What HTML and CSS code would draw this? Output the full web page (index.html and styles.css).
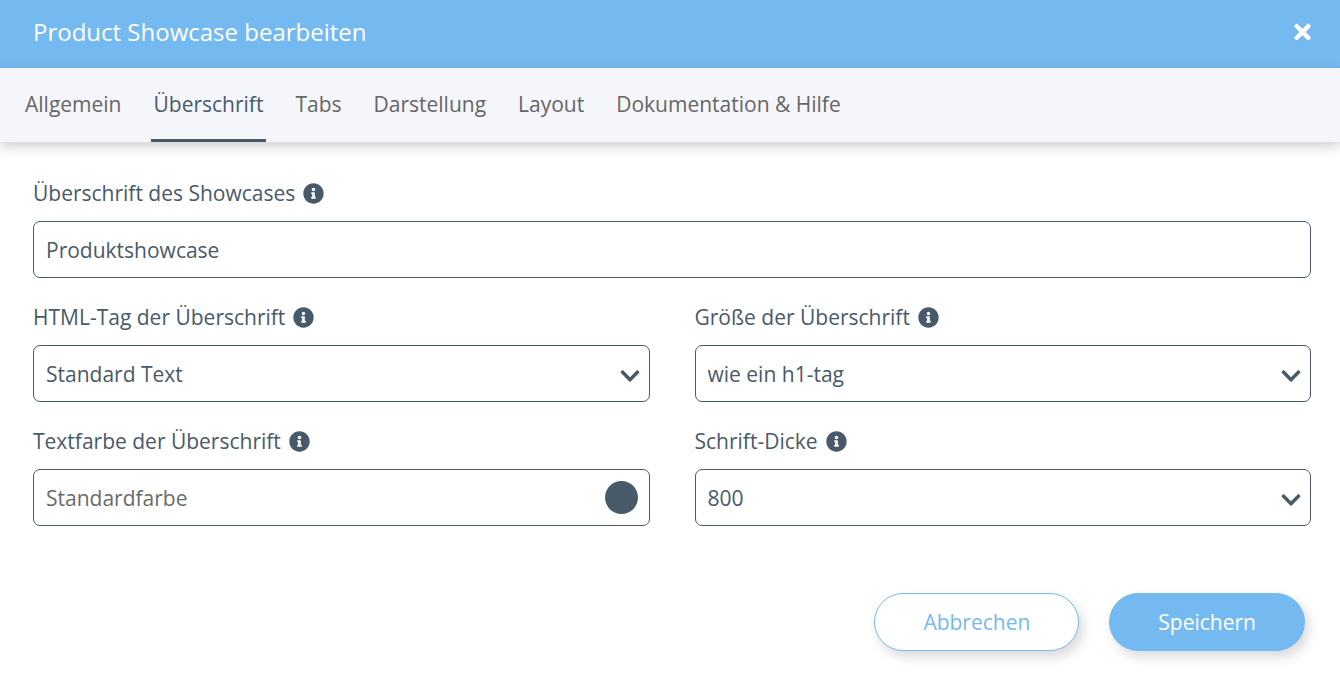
FILE: index.html
```html
<!DOCTYPE html>
<html lang="de">
<head>
  <meta charset="UTF-8">
  <meta name="viewport" content="width=device-width, initial-scale=1.0">
  <title>Product Showcase bearbeiten</title>
  <link rel="stylesheet" href="styles.css">
</head>
<body>

<!-- Icons -->
<svg class="sprite" aria-hidden="true">
  <symbol id="icon-info" viewBox="0 0 512 512">
    <path d="M256 8C119.043 8 8 119.083 8 256c0 136.997 111.043 248 248 248s248-111.003 248-248C504 119.083 392.957 8 256 8zm0 110c23.196 0 42 18.804 42 42s-18.804 42-42 42-42-18.804-42-42 18.804-42 42-42zm56 254c0 6.627-5.373 12-12 12h-88c-6.627 0-12-5.373-12-12v-24c0-6.627 5.373-12 12-12h12v-64h-12c-6.627 0-12-5.373-12-12v-24c0-6.627 5.373-12 12-12h64c6.627 0 12 5.373 12 12v100h12c6.627 0 12 5.373 12 12v24z"/>
  </symbol>
  <symbol id="icon-chevron" viewBox="0 0 448 512">
    <path d="M207.029 381.476L12.686 187.132c-9.373-9.373-9.373-24.569 0-33.941l22.667-22.667c9.357-9.357 24.522-9.375 33.901-.04L224 284.505l154.745-154.021c9.379-9.335 24.544-9.317 33.901.04l22.667 22.667c9.373 9.373 9.373 24.569 0 33.941L240.971 381.476c-9.373 9.372-24.569 9.372-33.942 0z"/>
  </symbol>
  <symbol id="icon-close" viewBox="0 0 352 512">
    <path d="M242.72 256l100.07-100.07c12.28-12.28 12.28-32.19 0-44.48l-22.24-22.24c-12.28-12.28-32.19-12.28-44.48 0L176 189.28 75.93 89.21c-12.28-12.28-32.19-12.28-44.48 0L9.21 111.45c-12.28 12.28-12.28 32.19 0 44.48L109.28 256 9.21 356.07c-12.28 12.28-12.28 32.19 0 44.48l22.24 22.24c12.28 12.28 32.2 12.28 44.48 0L176 322.72l100.07 100.07c12.28 12.28 32.2 12.28 44.48 0l22.24-22.24c12.28-12.28 12.28-32.19 0-44.48L242.72 256z"/>
  </symbol>
</svg>

<header class="modal-header">
  <h1>Product Showcase bearbeiten</h1>
  <button type="button" class="close" aria-label="Schließen">
    <svg><use href="#icon-close"/></svg>
  </button>
</header>

<nav class="tabs">
  <a href="#allgemein">Allgemein</a>
  <a href="#ueberschrift" class="active">Überschrift</a>
  <a href="#tabs">Tabs</a>
  <a href="#darstellung">Darstellung</a>
  <a href="#layout">Layout</a>
  <a href="#hilfe">Dokumentation &amp; Hilfe</a>
</nav>

<form class="settings">
  <div class="fields">
    <div class="field wide">
      <div class="field-label">
        <label for="title">Überschrift des Showcases</label>
        <svg class="info"><use href="#icon-info"/></svg>
      </div>
      <div class="control">
        <input type="text" id="title" value="Produktshowcase">
      </div>
    </div>

    <div class="field">
      <div class="field-label">
        <label for="tag">HTML-Tag der Überschrift</label>
        <svg class="info"><use href="#icon-info"/></svg>
      </div>
      <div class="control">
        <select id="tag">
          <option>Standard Text</option>
        </select>
        <svg class="chevron"><use href="#icon-chevron"/></svg>
      </div>
    </div>

    <div class="field">
      <div class="field-label">
        <label for="size">Größe der Überschrift</label>
        <svg class="info"><use href="#icon-info"/></svg>
      </div>
      <div class="control">
        <select id="size">
          <option>wie ein h1-tag</option>
        </select>
        <svg class="chevron"><use href="#icon-chevron"/></svg>
      </div>
    </div>

    <div class="field">
      <div class="field-label">
        <label for="color">Textfarbe der Überschrift</label>
        <svg class="info"><use href="#icon-info"/></svg>
      </div>
      <div class="control">
        <input type="text" id="color" placeholder="Standardfarbe">
        <button type="button" class="swatch" aria-label="Farbe wählen"></button>
      </div>
    </div>

    <div class="field">
      <div class="field-label">
        <label for="weight">Schrift-Dicke</label>
        <svg class="info"><use href="#icon-info"/></svg>
      </div>
      <div class="control">
        <select id="weight">
          <option>800</option>
        </select>
        <svg class="chevron"><use href="#icon-chevron"/></svg>
      </div>
    </div>
  </div>

  <div class="actions">
    <button type="button" class="btn">Abbrechen</button>
    <button type="submit" class="btn btn-primary">Speichern</button>
  </div>
</form>

</body>
</html>
```
FILE: styles.css
```css
* { margin: 0; padding: 0; box-sizing: border-box; }

body {
  font-family: "Open Sans", sans-serif;
  font-size: 21px;
  line-height: 30px;
  color: #485a6a;
  background: #fff;
}

button, input, select {
  font: inherit;
  color: inherit;
}
button { cursor: pointer; }
svg { fill: currentColor; }

.sprite { display: none; }

/* Kopfzeile */
.modal-header {
  display: flex;
  justify-content: space-between;
  align-items: center;
  height: 68px;
  padding: 0 29px 4px 33px;
  background: #75b9f1;
  color: #fff;
}
.modal-header h1 {
  font-size: 24px;
  font-weight: 400;
}
.close {
  display: flex;
  border: 0;
  background: none;
  color: inherit;
}
.close svg {
  width: 17px;
  height: 24px;
}

/* Reiter */
.tabs {
  display: flex;
  gap: 26px;
  height: 74px;
  padding: 0 22px;
  background: #f5f6fb;
  box-shadow: 0 4px 12px rgba(0, 0, 0, 0.2);
}
.tabs a {
  padding: 21px 3px 0;
  border-bottom: 3px solid transparent;
  color: #666;
  text-decoration: none;
}
.tabs a.active {
  color: #485a6a;
  border-color: #485a6a;
}

/* Formular */
.settings {
  padding: 36px 29px 36px 33px;
}
.fields {
  display: grid;
  grid-template-columns: 1fr 1fr;
  gap: 24px 45px;
}
.wide { grid-column: 1 / -1; }

.field-label {
  display: flex;
  align-items: center;
  gap: 8px;
  margin-bottom: 13px;
}
.info {
  width: 21px;
  height: 21px;
}

.control { position: relative; }
.control input,
.control select {
  display: block;
  width: 100%;
  height: 57px;
  padding: 0 12px;
  border: 1px solid #485a6a;
  border-radius: 7px;
  background: #fff;
  appearance: none;
}
.control input::placeholder {
  color: #6b6b6b;
  opacity: 1;
}
.chevron {
  position: absolute;
  top: 20px;
  right: 10px;
  width: 20px;
  height: 22px;
  pointer-events: none;
}
.swatch {
  position: absolute;
  top: 12px;
  right: 12px;
  width: 33px;
  height: 33px;
  border: 0;
  border-radius: 50%;
  background: #485a6a;
}

/* Buttons */
.actions {
  display: flex;
  justify-content: flex-end;
  gap: 30px;
  margin-top: 67px;
  padding-right: 6px;
}
.btn {
  height: 58px;
  padding: 0 48px;
  border: 1px solid #75b9f1;
  border-radius: 29px;
  background: #fff;
  color: #75b9f1;
  box-shadow: 4px 6px 12px rgba(0, 0, 0, 0.15);
}
.btn-primary {
  background: #75b9f1;
  color: #fff;
}
```
